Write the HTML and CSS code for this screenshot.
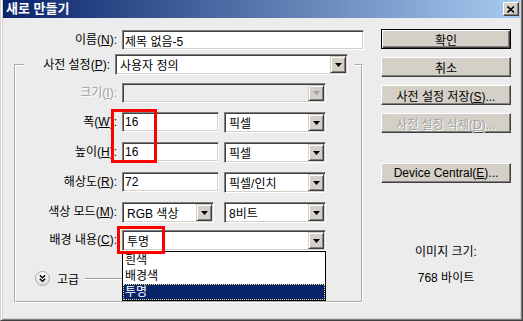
FILE: index.html
```html
<!DOCTYPE html>
<html lang="ko">
<head>
  <meta charset="UTF-8">
  <title>새로 만들기</title>
  <link rel="stylesheet" href="styles.css">
</head>
<body>
  <div class="window">
    <div class="titlebar">
      <span class="title">새로 만들기</span>
      <span class="close-btn">
        <svg width="8" height="7" viewBox="0 0 8 7"><path d="M0.5 0.5 L7 6.5 M7 0.5 L0.5 6.5" stroke="#000" stroke-width="1.6" fill="none"/></svg>
      </span>
    </div>

    <div class="dialog">
      <div class="form">
        <div class="name-row">
          <label class="label">이름(<u>N</u>):</label>
          <input class="field" type="text" value="제목 없음-5">
        </div>

        <fieldset class="group">
          <legend class="preset">
            <label class="label preset-label">사전 설정(<u>P</u>):</label>
            <div class="combo preset-combo">
              <span class="combo-value">사용자 정의</span>
              <span class="combo-arrow"><svg width="7" height="4" viewBox="0 0 7 4"><path d="M0 0 H7 L3.5 4 Z" fill="#000"/></svg></span>
            </div>
          </legend>

          <div class="grid">
            <label class="label disabled">크기(<u>I</u>):</label>
            <div class="combo combo-disabled span-2">
              <span class="combo-value"></span>
              <span class="combo-arrow"><svg width="7" height="4" viewBox="0 0 7 4"><path d="M0 0 H7 L3.5 4 Z" fill="#a0a0a0"/></svg></span>
            </div>

            <label class="label">폭(<u>W</u>):</label>
            <input class="field" type="text" value="16">
            <div class="combo">
              <span class="combo-value">픽셀</span>
              <span class="combo-arrow"><svg width="7" height="4" viewBox="0 0 7 4"><path d="M0 0 H7 L3.5 4 Z" fill="#000"/></svg></span>
            </div>

            <label class="label">높이(<u>H</u>):</label>
            <input class="field" type="text" value="16">
            <div class="combo">
              <span class="combo-value">픽셀</span>
              <span class="combo-arrow"><svg width="7" height="4" viewBox="0 0 7 4"><path d="M0 0 H7 L3.5 4 Z" fill="#000"/></svg></span>
            </div>

            <label class="label">해상도(<u>R</u>):</label>
            <input class="field" type="text" value="72">
            <div class="combo">
              <span class="combo-value">픽셀/인치</span>
              <span class="combo-arrow"><svg width="7" height="4" viewBox="0 0 7 4"><path d="M0 0 H7 L3.5 4 Z" fill="#000"/></svg></span>
            </div>

            <label class="label">색상 모드(<u>M</u>):</label>
            <div class="combo mode-combo">
              <span class="combo-value">RGB 색상</span>
              <span class="combo-arrow"><svg width="7" height="4" viewBox="0 0 7 4"><path d="M0 0 H7 L3.5 4 Z" fill="#000"/></svg></span>
            </div>
            <div class="combo">
              <span class="combo-value">8비트</span>
              <span class="combo-arrow"><svg width="7" height="4" viewBox="0 0 7 4"><path d="M0 0 H7 L3.5 4 Z" fill="#000"/></svg></span>
            </div>

            <label class="label bg-row">배경 내용(<u>C</u>):</label>
            <div class="combo span-2 bg-row bg-combo">
              <span class="combo-value">투명</span>
              <span class="combo-arrow"><svg width="7" height="4" viewBox="0 0 7 4"><path d="M0 0 H7 L3.5 4 Z" fill="#000"/></svg></span>
              <ul class="combo-list">
                <li>흰색</li>
                <li>배경색</li>
                <li class="selected">투명</li>
              </ul>
            </div>
          </div>

          <div class="advanced">
            <svg class="adv-icon" width="15" height="15" viewBox="0 0 15 15">
              <defs>
                <linearGradient id="advfill" x1="0" y1="0" x2="0" y2="1">
                  <stop offset="0" stop-color="#ffffff"/>
                  <stop offset="1" stop-color="#dcdcdc"/>
                </linearGradient>
              </defs>
              <circle cx="7.5" cy="7.5" r="7" fill="url(#advfill)" stroke="#a8a8a8"/>
              <path d="M4.8 4.3 L7.5 6.8 L10.2 4.3 M4.8 7.8 L7.5 10.3 L10.2 7.8" stroke="#000" stroke-width="1.4" fill="none"/>
            </svg>
            <span class="adv-text">고급</span>
            <span class="adv-line"></span>
          </div>
        </fieldset>
      </div>

      <div class="buttons">
        <button class="btn btn-default">확인</button>
        <button class="btn">취소</button>
        <button class="btn">사전 설정 저장(<u>S</u>)...</button>
        <button class="btn" disabled>사전 설정 삭제(<u>D</u>)...</button>
        <button class="btn btn-device">Device Central(<u>E</u>)...</button>
        <div class="info">
          <p>이미지 크기:</p>
          <p>768 바이트</p>
        </div>
      </div>
    </div>

    <div class="mark mark-size"></div>
    <div class="mark mark-bg"></div>
  </div>
</body>
</html>
```

FILE: styles.css
```css
* {
  box-sizing: border-box;
}
body {
  margin: 0;
  font-family: "Liberation Sans", "Noto Sans CJK KR", sans-serif;
  font-size: 12px;
  color: #000;
  background: #d4d0c8;
}
.window {
  position: relative;
  width: 523px;
  height: 321px;
  display: flex;
  flex-direction: column;
  background: #d4d0c8;
  border-left: 1px solid #d4d0c8;
  border-right: 1px solid #404040;
  border-bottom: 1px solid #404040;
  padding: 0 2px 2px 2px;
  box-shadow: inset 1px 0 #fff, inset -1px -1px #808080;
}
.titlebar {
  height: 18px;
  flex: none;
  display: flex;
  align-items: center;
  justify-content: space-between;
  padding: 0 1px 0 3px;
  background: linear-gradient(90deg, #0a246a, #a6caf0);
}
.title {
  color: #fff;
  font-weight: bold;
  font-size: 13px;
  line-height: 18px;
}
.close-btn {
  width: 16px;
  height: 14px;
  display: flex;
  align-items: center;
  justify-content: center;
  background: #d4d0c8;
  border: 1px solid;
  border-color: #fff #404040 #404040 #fff;
  box-shadow: inset -1px -1px #808080;
}
.dialog {
  flex: 1;
  display: flex;
  background: #ececec;
  padding: 12px 9px 0 11px;
}
.form {
  width: 351px;
}
.label {
  text-align: right;
  line-height: 20px;
  white-space: nowrap;
}
.disabled {
  color: #a0a0a0;
  text-shadow: 1px 1px #fff;
}
.name-row {
  display: grid;
  grid-template-columns: 103px 242px;
  column-gap: 5px;
}
.field {
  height: 20px;
  font: inherit;
  padding: 0 2px;
  background: #fff;
  border: 1px solid;
  border-color: #808080 #fff #fff #808080;
  box-shadow: inset 1px 1px #404040, inset -1px -1px #d4d0c8;
  outline: none;
}
.group {
  width: 349px;
  margin: 4px 0 0 0;
  padding: 8px 0 15px 0;
  border: 2px groove #fff;
  min-width: 0;
}
.preset {
  display: flex;
  align-items: center;
  gap: 5px;
  margin-left: 8px;
  padding: 0 7px 0 0;
}
.preset-label {
  width: 86px;
}
.preset-combo {
  width: 233px;
}
.combo {
  position: relative;
  display: flex;
  align-items: center;
  height: 21px;
  padding: 1px;
  background: #fff;
  border: 1px solid;
  border-color: #808080 #fff #fff #808080;
  box-shadow: inset 1px 1px #404040, inset -1px -1px #d4d0c8;
}
.combo-value {
  flex: 1;
  padding-left: 3px;
  white-space: nowrap;
}
.combo-arrow {
  width: 16px;
  height: 100%;
  display: flex;
  align-items: center;
  justify-content: center;
  background: #d4d0c8;
  border: 1px solid;
  border-color: #d4d0c8 #404040 #404040 #d4d0c8;
  box-shadow: inset 1px 1px #fff, inset -1px -1px #808080;
}
.combo-disabled {
  background: #ececec;
  height: 20px;
}
.grid {
  display: grid;
  grid-template-columns: 101px 97px 102px;
  grid-template-rows: 20px repeat(5, 21px);
  column-gap: 5px;
  row-gap: 9px;
}
.span-2 {
  grid-column: 2 / 4;
}
.mode-combo {
  width: 92px;
}
.bg-row {
  margin-top: -2px;
}
.combo-list {
  position: absolute;
  left: -1px;
  right: -1px;
  top: calc(100% + 1px);
  margin: 0;
  padding: 0;
  list-style: none;
  background: #fff;
  border: 1px solid #000;
  z-index: 2;
}
.combo-list li {
  height: 16px;
  line-height: 16px;
  padding-left: 2px;
}
.combo-list .selected {
  background: #0a246a;
  color: #fff;
  outline: 1px dotted #e8e29a;
  outline-offset: -1px;
}
.advanced {
  display: flex;
  align-items: center;
  height: 15px;
  margin: 18px 0 0 19px;
}
.adv-text {
  margin-left: 7px;
}
.adv-line {
  flex: 1;
  height: 2px;
  margin: 0 60px 0 6px;
  border-top: 1px solid #a0a0a0;
  border-bottom: 1px solid #fff;
}
.buttons {
  width: 130px;
  margin: -1px 0 0 auto;
  display: flex;
  flex-direction: column;
  gap: 8px;
}
.btn {
  height: 20px;
  width: 100%;
  padding: 0;
  font: inherit;
  color: #000;
  background: #d4d0c8;
  border: 1px solid;
  border-color: #fff #404040 #404040 #fff;
  box-shadow: inset -1px -1px #808080;
}
.btn-default {
  border-color: #000;
  box-shadow: inset 1px 1px #fff, inset -1px -1px #404040, inset -2px -2px #808080;
}
.btn:disabled {
  color: #a0a0a0;
  text-shadow: 1px 1px #fff;
}
.btn-device {
  margin-top: 22px;
}
.info {
  margin-top: 53px;
  text-align: center;
}
.info p {
  margin: 0 0 10px 0;
  line-height: 16px;
}
.mark {
  position: absolute;
  border: 3px solid #f00;
  z-index: 3;
}
.mark-size {
  left: 110px;
  top: 109px;
  width: 46px;
  height: 54px;
}
.mark-bg {
  left: 116px;
  top: 226px;
  width: 48px;
  height: 28px;
}
```
